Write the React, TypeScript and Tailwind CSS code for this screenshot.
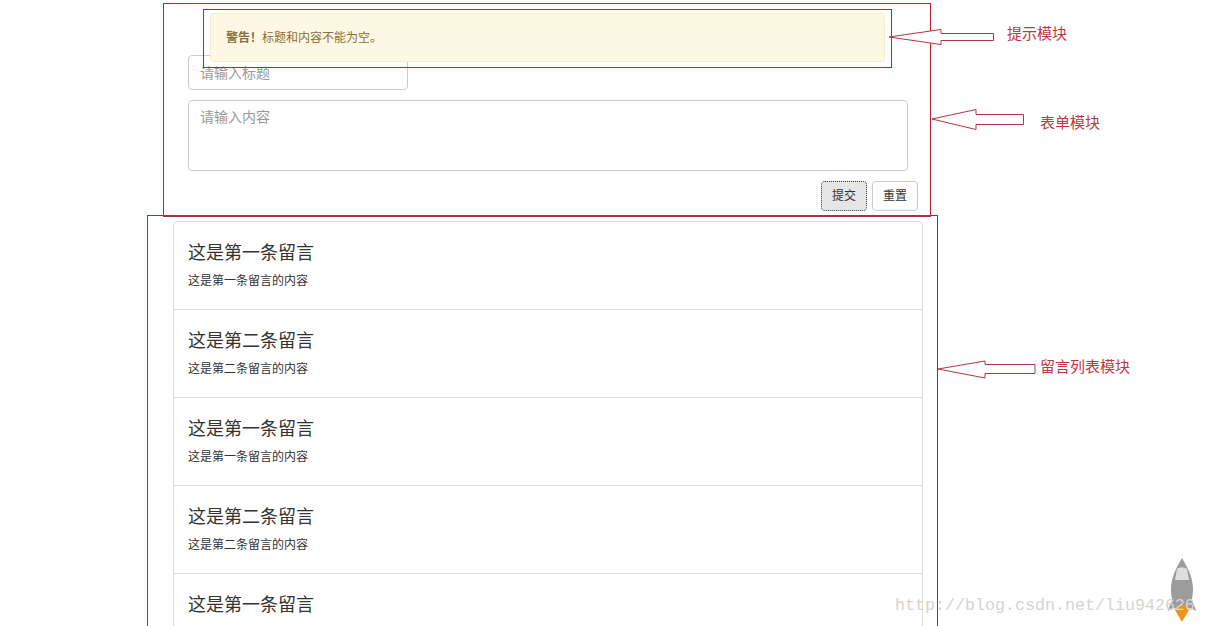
import React from 'react';

const fontStack = { fontFamily: '"Liberation Sans", "Noto Sans CJK SC", sans-serif' };

const messages = [
  { title: '这是第一条留言', content: '这是第一条留言的内容' },
  { title: '这是第二条留言', content: '这是第二条留言的内容' },
  { title: '这是第一条留言', content: '这是第一条留言的内容' },
  { title: '这是第二条留言', content: '这是第二条留言的内容' },
  { title: '这是第一条留言', content: '这是第一条留言的内容' },
];

// Hand-drawn arrows and boxes the author put on top of the screenshot
const Arrow = ({ points }: { points: string }) => (
  <polygon points={points} fill="#fff" stroke="#b8333f" strokeWidth="1" />
);

const Rocket = () => (
  <svg className="absolute left-[1168px] top-[556px]" width="30" height="68" viewBox="0 0 30 68">
    <path d="M8 51 C10 49 18 49 20 51 L21 54 L14 66 L7 54 Z" fill="#f39419" />
    <path d="M5 44 C2 48 1 51 0 55 C3 53 6 52 8 52 Z" fill="#9c9c9c" />
    <path d="M23 44 C26 48 27 51 28 55 C25 53 22 52 20 52 Z" fill="#9c9c9c" />
    <path d="M14 2 C10 9 3 20 3 33 C3 41 5 48 7 52 C10 49 18 49 21 52 C23 48 25 41 25 33 C25 20 18 9 14 2 Z" fill="#9c9c9c" />
    <path d="M9 13 C11 11 17 11 19 13 L21 24 L7 24 Z" fill="#dedede" />
  </svg>
);

const Annotations = () => (
  <>
    <svg className="absolute left-0 top-0" width="1206" height="626">
      <path
        d="M163.5 3.5H930.5V216.5H163.5Z M203.5 9.5H891.5V67.5H203.5Z M147.5 215.5H937.5V640H147.5Z"
        fill="none"
        stroke="#c0202e"
        strokeWidth="1"
        shapeRendering="crispEdges"
      />
      <line x1="163" y1="216" x2="931" y2="216" stroke="#a8323f" strokeWidth="2" shapeRendering="crispEdges" />
      <Arrow points="889,37 941,29.5 941,33.5 993.5,33.5 993.5,40.5 941,40.5 941,44.5" />
      <Arrow points="932,119 976,109.5 976,114.5 1023.5,114.5 1023.5,124.5 976,124.5 976,129.5" />
      <Arrow points="938,369 985,361 985,364.5 1035,364.5 1035,373.5 985,373.5 985,378" />
    </svg>
    <span className="absolute left-[1007px] top-[24px] text-[15px] leading-[20px] text-[#c1363f]">提示模块</span>
    <span className="absolute left-[1040px] top-[113px] text-[15px] leading-[20px] text-[#c1363f]">表单模块</span>
    <span className="absolute left-[1040px] top-[357px] text-[15px] leading-[20px] text-[#c1363f]">留言列表模块</span>
    <Rocket />
    <span
      className="absolute left-[895px] top-[596px] text-[16.67px] leading-[20px] text-[#d4d4d4] whitespace-nowrap"
      style={{ fontFamily: '"Liberation Mono", monospace' }}
    >
      http://blog.csdn.net/liu942626
    </span>
  </>
);

export default function App() {
  return (
    <div className="relative w-[1206px] h-[626px] overflow-hidden bg-white text-[#333]" style={fontStack}>
      <div className="ml-[188px] w-[720px] pt-[13px]">
        <div className="relative z-10 ml-[22px] w-[675px] h-[49px] flex items-center px-[15px] bg-[#fcf8e3] border border-[#faebcc] rounded text-[12px] text-[#8a6d3b]">
          <strong className="font-bold">警告！</strong>标题和内容不能为空。
        </div>
        <input
          placeholder="请输入标题"
          className="block -mt-[7px] w-[220px] h-[35px] px-[11px] text-[14px] border border-[#ccc] rounded placeholder:text-[#999] outline-none"
        />
        <textarea
          placeholder="请输入内容"
          className="block mt-[10px] w-[720px] h-[71px] px-[11px] py-[6px] text-[14px] leading-[20px] border border-[#ccc] rounded placeholder:text-[#999] outline-none resize-none"
        />
        <div className="flex justify-end gap-[5px] mt-[10px] -mr-[10px]">
          <button className="w-[46px] h-[30px] text-[12px] bg-[#e6e6e6] border border-dotted border-[#333] rounded">提交</button>
          <button className="w-[46px] h-[30px] text-[12px] bg-white border border-[#ccc] rounded">重置</button>
        </div>
      </div>
      <ul className="ml-[173px] mt-[10px] w-[750px] border-x border-[#ddd] rounded-t">
        {messages.map((m, i) => (
          <li key={i} className="h-[88px] px-[14px] pt-[18px] border-t border-[#ddd] first:rounded-t">
            <h4 className="text-[18px] leading-[26px] font-normal">{m.title}</h4>
            <p className="mt-[7px] text-[12px] leading-[17px]">{m.content}</p>
          </li>
        ))}
      </ul>
      <Annotations />
    </div>
  );
}
